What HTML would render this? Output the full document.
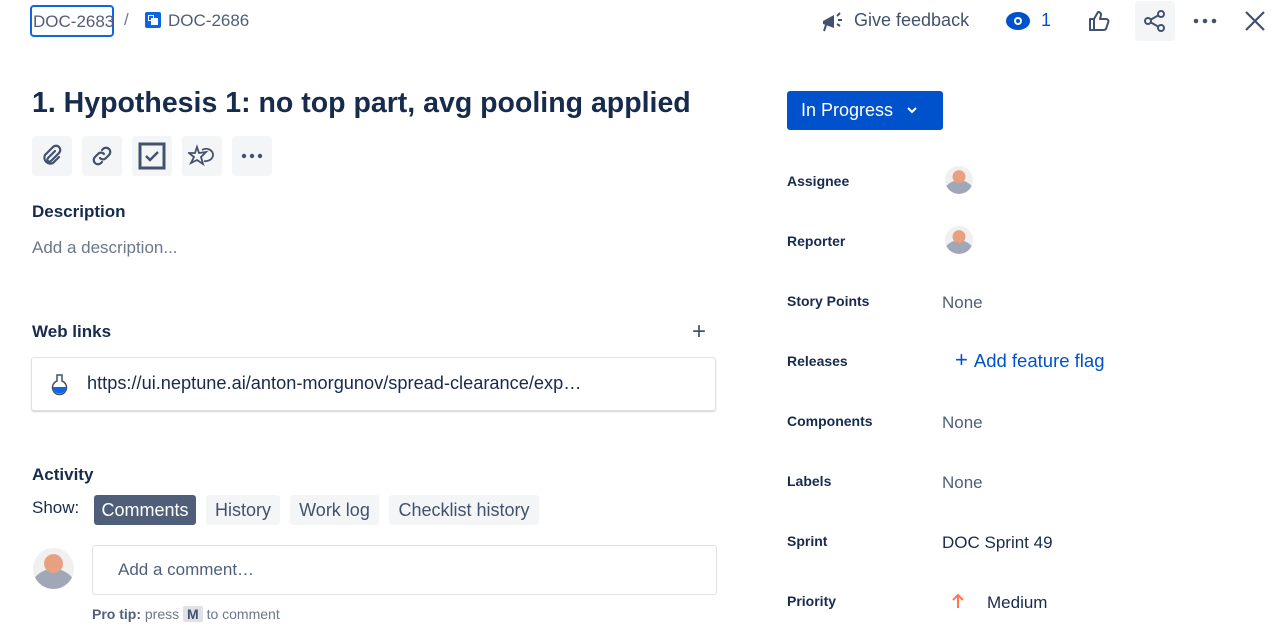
<!DOCTYPE html>
<html><head><meta charset="utf-8"><style>
*{box-sizing:border-box;margin:0;padding:0}
body{width:1274px;height:639px;overflow:hidden;background:#fff;font-family:"Liberation Sans",sans-serif;color:#172b4d;position:relative}
.a{position:absolute;white-space:nowrap}
.ib{position:absolute;width:40px;height:40px;background:#f4f5f7;border-radius:3px;display:flex;align-items:center;justify-content:center}
.lbl{position:absolute;left:787px;font-size:14px;font-weight:bold;color:#172b4d}
.val{position:absolute;left:942px;font-size:17px;color:#505f79}
.av{position:absolute;width:28px;height:28px;border-radius:50%;background:radial-gradient(circle at 50% 38%,#e8a080 0 28%,transparent 30%),radial-gradient(circle at 50% 110%,#a0a8b8 0 48%,transparent 50%),#f0f0f0}
.chip{position:absolute;top:495px;height:30px;background:#f4f5f7;border-radius:3px;font-size:18px;color:#42526e;padding:5px 7px;text-align:center}
</style></head><body>
<div class="a" style="left:30px;top:5px;width:84px;height:32px;border:2px solid #0c66e4;border-radius:4px;font-size:17px;color:#505f79;padding:5px 0 0 1px">DOC-2683</div>
<div class="a" style="left:124px;top:10px;font-size:17px;color:#6b778c">/</div>
<div class="a" style="left:145px;top:12px;width:16px;height:16px;background:#0c66e4;border-radius:2px"><div style="position:absolute;left:3px;top:3px;width:6px;height:6px;border:1.5px solid #fff"></div><div style="position:absolute;left:6px;top:6px;width:7px;height:7px;background:#fff"></div></div>
<div class="a" style="left:168px;top:11px;font-size:17px;color:#505f79">DOC-2686</div>

<svg class="a" style="left:820px;top:10px" width="26" height="24" viewBox="0 0 26 24"><path d="M3 11l11-6v13L3 14z" fill="#42526e"/><path d="M6 15l-2 6" stroke="#42526e" stroke-width="2"/><path d="M17 6l3-3M18 10h4M17 14l3 2" stroke="#42526e" stroke-width="2"/></svg>
<div class="a" style="left:854px;top:10px;font-size:18px;color:#42526e">Give feedback</div>
<svg class="a" style="left:1005px;top:10px" width="26" height="22" viewBox="0 0 26 22"><ellipse cx="13" cy="11" rx="12" ry="9" fill="#0052cc"/><circle cx="13" cy="11" r="4" fill="#fff"/><circle cx="13" cy="11" r="2" fill="#0052cc"/></svg>
<div class="a" style="left:1041px;top:10px;font-size:18px;color:#0052cc">1</div>
<svg class="a" style="left:1087px;top:9px" width="26" height="24" viewBox="0 0 26 24"><path d="M3 10h4v11H3zM7 10l4-7c2 0 3 1 3 3l-1 4h6c2 0 3 2 2 4l-2 6c-1 1-2 1-3 1H7" fill="none" stroke="#42526e" stroke-width="2" stroke-linejoin="round"/></svg>
<div class="a" style="left:1135px;top:1px;width:40px;height:40px;background:#f4f5f7;border-radius:3px"></div>
<svg class="a" style="left:1143px;top:9px" width="24" height="24" viewBox="0 0 24 24"><circle cx="18" cy="5" r="3" fill="none" stroke="#42526e" stroke-width="2"/><circle cx="5" cy="12" r="3" fill="none" stroke="#42526e" stroke-width="2"/><circle cx="18" cy="19" r="3" fill="none" stroke="#42526e" stroke-width="2"/><path d="M8 10.5l7-4M8 13.5l7 4" stroke="#42526e" stroke-width="2"/></svg>
<svg class="a" style="left:1193px;top:17px" width="24" height="8" viewBox="0 0 24 8"><circle cx="3" cy="4" r="2.3" fill="#42526e"/><circle cx="12" cy="4" r="2.3" fill="#42526e"/><circle cx="21" cy="4" r="2.3" fill="#42526e"/></svg>
<svg class="a" style="left:1244px;top:10px" width="22" height="22" viewBox="0 0 22 22"><path d="M2 2l18 18M20 2L2 20" stroke="#42526e" stroke-width="2.2"/></svg>

<div class="a" style="left:32px;top:87px;font-size:28.5px;font-weight:bold;color:#172b4d">1. Hypothesis 1: no top part, avg pooling applied</div>

<div class="ib" style="left:32px;top:136px"><svg width="24" height="24" viewBox="0 0 24 24"><path d="M15 7l-7 7a2 2 0 003 3l8-8a4 4 0 00-6-6l-8 8a6 6 0 008 8l6-6" fill="none" stroke="#42526e" stroke-width="2.2" stroke-linecap="round"/></svg></div>
<div class="ib" style="left:82px;top:136px"><svg width="24" height="24" viewBox="0 0 24 24"><path d="M10 14a4 4 0 006 0l3-3a4 4 0 00-6-6l-1 1M14 10a4 4 0 00-6 0l-3 3a4 4 0 006 6l1-1" fill="none" stroke="#42526e" stroke-width="2.2" stroke-linecap="round"/></svg></div>
<div class="ib" style="left:132px;top:136px"><svg width="28" height="28" viewBox="0 0 28 28"><rect x="2" y="2" width="24" height="24" fill="none" stroke="#42526e" stroke-width="3"/><path d="M8 14l4 4 8-8" fill="none" stroke="#42526e" stroke-width="2.4"/></svg></div>
<div class="ib" style="left:182px;top:136px"><svg width="28" height="24" viewBox="0 0 28 24"><path d="M9 3l2 6 7-1-5 5 2 7-6-4-6 3 3-6-5-4 6 0z" fill="none" stroke="#42526e" stroke-width="1.8"/><path d="M14 6c5-3 11 0 11 5 0 4-5 7-9 6" fill="none" stroke="#42526e" stroke-width="1.8"/></svg></div>
<div class="ib" style="left:232px;top:136px"><svg width="22" height="6" viewBox="0 0 22 6"><circle cx="3" cy="3" r="2.2" fill="#42526e"/><circle cx="11" cy="3" r="2.2" fill="#42526e"/><circle cx="19" cy="3" r="2.2" fill="#42526e"/></svg></div>

<div class="a" style="left:32px;top:202px;font-size:17px;font-weight:bold">Description</div>
<div class="a" style="left:32px;top:238px;font-size:17px;color:#6b778c">Add a description...</div>

<div class="a" style="left:32px;top:322px;font-size:17px;font-weight:bold">Web links</div>
<div class="a" style="left:692px;top:318px;font-size:24px;color:#42526e;font-weight:300">+</div>
<div class="a" style="left:31px;top:357px;width:685px;height:54px;border:1px solid #dfe1e6;border-radius:3px;box-shadow:0 1px 1px rgba(9,30,66,.2)"></div>
<svg class="a" style="left:50px;top:372px" width="20" height="24" viewBox="0 0 20 24"><path d="M7 3h5v6a7 7 0 11-5 0z" fill="#fff" stroke="#42526e" stroke-width="1.5"/><path d="M3 15h13a6 6 0 01-13 0z" fill="#0c66e4"/></svg>
<div class="a" style="left:87px;top:373px;font-size:18.2px;color:#172b4d">https://ui.neptune.ai/anton-morgunov/spread-clearance/exp…</div>

<div class="a" style="left:32px;top:465px;font-size:17px;font-weight:bold">Activity</div>
<div class="a" style="left:32px;top:498px;font-size:17px;color:#172b4d">Show:</div>
<div class="chip" style="left:94px;width:102px;background:#505f79;color:#fff">Comments</div>
<div class="chip" style="left:206px;width:74px">History</div>
<div class="chip" style="left:290px;width:89px">Work log</div>
<div class="chip" style="left:389px;width:150px">Checklist history</div>
<div class="av" style="left:33px;top:548px;width:41px;height:41px"></div>
<div class="a" style="left:92px;top:545px;width:625px;height:50px;border:1px solid #dfe1e6;border-radius:3px;padding:14px 0 0 25px;font-size:17px;color:#505f79">Add a comment…</div>
<div class="a" style="left:92px;top:606px;font-size:14px;color:#6b778c"><b style="color:#505f79">Pro tip:</b> press <span style="background:#dfe1e6;padding:0 4px;border-radius:2px;font-weight:bold;color:#42526e">M</span> to comment</div>

<div class="a" style="left:787px;top:91px;width:156px;height:39px;background:#0052cc;border-radius:3px;color:#fff;font-size:18px;padding:9px 0 0 14px">In Progress <svg style="margin-left:8px;vertical-align:2px" width="12" height="8" viewBox="0 0 12 8"><path d="M2 2l4 4 4-4" fill="none" stroke="#fff" stroke-width="2"/></svg></div>

<div class="lbl" style="top:173px">Assignee</div><div class="av" style="left:945px;top:166px"></div>
<div class="lbl" style="top:233px">Reporter</div><div class="av" style="left:945px;top:226px"></div>
<div class="lbl" style="top:293px">Story Points</div><div class="val" style="top:293px">None</div>
<div class="lbl" style="top:353px">Releases</div><div class="val" style="left:955px;top:350px;color:#0052cc;font-size:18.5px"><span style="font-size:22px;line-height:18px;margin-right:6px">+</span>Add feature flag</div>
<div class="lbl" style="top:413px">Components</div><div class="val" style="top:413px">None</div>
<div class="lbl" style="top:473px">Labels</div><div class="val" style="top:473px">None</div>
<div class="lbl" style="top:533px">Sprint</div><div class="val" style="top:533px;color:#172b4d">DOC Sprint 49</div>
<div class="lbl" style="top:593px">Priority</div>
<svg class="a" style="left:950px;top:592px" width="16" height="18" viewBox="0 0 16 18"><path d="M8 16V3M3 8l5-5 5 5" fill="none" stroke="#ff7452" stroke-width="2"/></svg>
<div class="val" style="left:987px;top:593px;color:#172b4d">Medium</div>
</body></html>
